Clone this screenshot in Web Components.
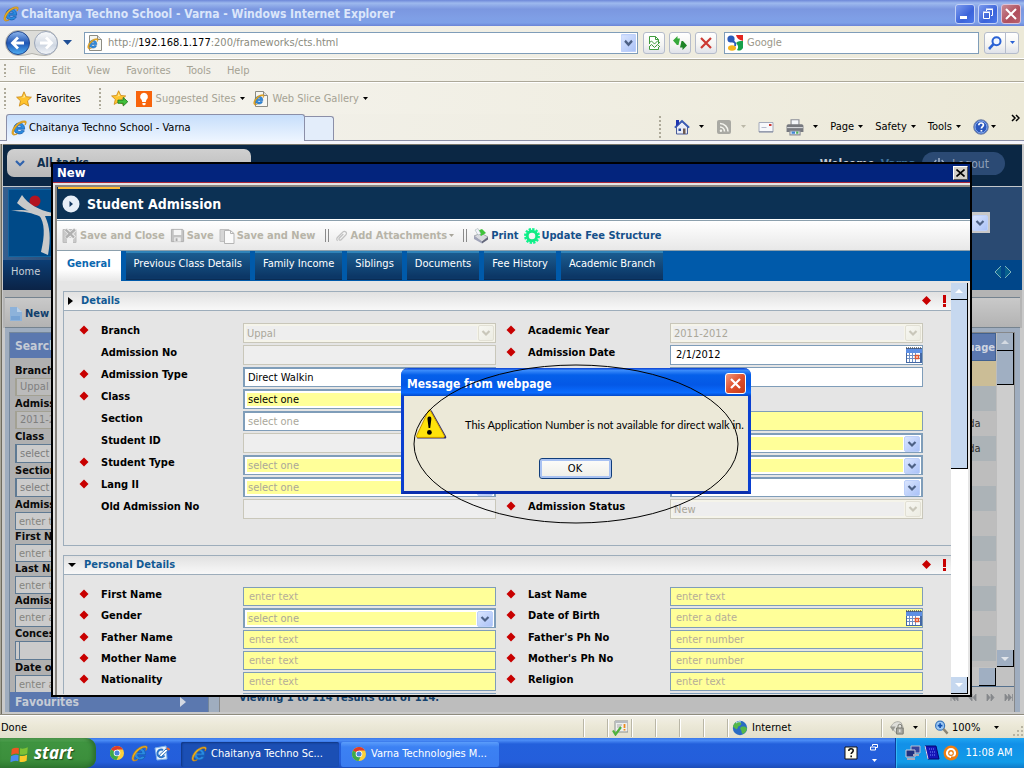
<!DOCTYPE html>
<html lang="en">
<head>
<meta charset="utf-8">
<title>Chaitanya Techno School - Varna</title>
<style>
  html, body { margin: 0; height: 100%; }
  body {
    --ui: "DejaVu Sans Condensed", "Noto Sans", sans-serif;
    --bold: "DejaVu Sans Condensed", "Noto Sans", sans-serif;
    font: 11px/14px var(--ui);
    color: #000;
    overflow: hidden;
  }
</style>
</head>
<body>
<xp-desktop></xp-desktop>
<script>
const E_MARK = `<path d="M13.600 9.200H6.200c.1 1.500 1 2.300 2.200 2.300.9 0 1.500-.4 1.900-1l3 .3c-.8 2-2.600 3.100-5 3.100C5 13.900 2.900 11.700 2.900 8.400 2.900 5.200 5.200 3 8.300 3c3.200 0 5.500 2.300 5.300 6.200zM6.300 7.200h4c-.2-1.300-1-1.900-2-1.900s-1.800.6-2 1.900z" fill="#2a8be0" stroke="#1560b4" stroke-width=".8"/><path d="M14.800 1.200C12 .2 7.600 2 4.600 5.200 1.600 8.400.3 12.500 1.400 14.300c.8 1.200 2.800.8 5-.6-1.700.7-3.200.9-3.700.1-.7-1.200.4-4.400 2.900-7.200 2.600-3 6.300-4.800 8-4.200.9.4.9 1.400.4 2.700 1-1.500 1.700-3.200.8-3.900z" fill="#f2b21d" stroke="#c98a12" stroke-width=".7"/>`;
const CHROME = `<circle cx="8" cy="8" r="7" fill="#fbd13a"/><path d="M8 8 2 4.400A7 7 0 0 1 14.100 4.600H8z" fill="#df3b2c"/><path d="M2 4.400A7 7 0 0 0 7.600 15L10 9.500 8 8z" fill="#3daa4b"/><circle cx="8" cy="8" r="3.300" fill="#fff"/><circle cx="8" cy="8" r="2.500" fill="#4a86dd"/>`;
const STAR = `<path d="M8 .8l2.200 4.900 5.200.5-3.900 3.600 1.200 5.300L8 12.400l-4.700 2.700 1.200-5.300L.6 6.200l5.200-.5z" fill="#ffc42e" stroke="#c98510" stroke-width=".8"/><path d="M8 3l1.300 3.300-4.800.6 3-.9z" fill="#fff0a8"/>`;
const ICONS = {
  ie: E_MARK,
  iepage: `<path d="M2.500.5h8l4 4v11h-12z" fill="#f7f7f2" stroke="#8c8c84"/><path d="M10.500.5v4h4" fill="#ddd" stroke="#8c8c84"/><g transform="translate(0 3) scale(.72)">${E_MARK}</g>`,
  chrome: CHROME,
  star: STAR,
  addstar: `<g transform="scale(.9)">${STAR}</g><path d="M6.500 9.500h5V7l4.300 4-4.300 4v-2.500h-5z" fill="#41c03c" stroke="#207a1f" stroke-width=".8"/>`,
  bulb: `<rect width="16" height="16" fill="#f8640c"/><path d="M8 1.800a4 4 0 0 1 2.300 7.200L9.800 11H6.200L5.700 9A4 4 0 0 1 8 1.800zM6.400 12h3.200v1.600L8 14.600l-1.600-1z" fill="#fff"/>`,
  home: `<path d="M2.500 8 8 2.500 13.500 8v7h-11z" fill="#e9ecf6" stroke="#4a5c9a"/><path d="M.8 8.700 8 2l7.200 6.700" fill="none" stroke="#3c5cb4" stroke-width="1.800"/><path d="M2 1h3v4l-3 2.500z" fill="#1f35b0"/><path d="M4.500 9.500h2.500V12H4.500z" fill="#24489f"/><path d="M9 9.500h2.500V15H9z" fill="#6d5a52"/>`,
  rss: `<rect x="1" y="1" width="14" height="14" rx="2" fill="#a9a9a3"/><g fill="none" stroke="#f4f4ee" stroke-width="1.600"><path d="M4 8a4.500 4.500 0 0 1 4.500 4.500M4 4.500a8 8 0 0 1 8 8"/></g><circle cx="4.900" cy="11.800" r="1.200" fill="#f4f4ee"/>`,
  mail: `<path d="M1 3.500h14v9.500H1z" fill="#f7f8fb" stroke="#a4aabb"/><path d="M1 12.800h14" stroke="#7f869c"/><path d="M11 5h2.500v2H11z" fill="#cc3a33"/><path d="M3.500 8.500h5" stroke="#b6bccd"/>`,
  print: `<path d="M4.500 1.500h7V7h-7z" fill="#f4f6fa" stroke="#8b8e96"/><path d="M.5 7C.5 6 1.500 5.500 2.500 5.500h11c1 0 2 .5 2 1.500v5.500H.5z" fill="#77797f"/><path d="M1 8.500h14" stroke="#d3d5d9"/><path d="M3.500 11.500h9V15h-9z" fill="#e6eefa" stroke="#8b8e96"/><path d="M5 12h3v2H5z" fill="#3f86d6"/><path d="M9 12h2v2H9z" fill="#54b053"/>`,
  help: `<circle cx="8" cy="8" r="7.300" fill="#2a57bd" stroke="#7d8aa6"/><circle cx="8" cy="8" r="6" fill="none" stroke="#8fb2ee"/><path d="M5.800 6.300C5.800 4.800 6.800 4 8.100 4s2.300.8 2.300 2.100c0 1.600-2 1.700-2 3.500M8.400 11v1.500" fill="none" stroke="#fff" stroke-width="1.700"/>`,
  compat: `<path d="M3.500 9V1.500h6l3 3V9M3.500 12v2.500h9V12" fill="#fdfffd" stroke="#3f9b3d"/><path d="M9.500 1.500v3h3" fill="none" stroke="#3f9b3d"/><path d="M3 8l2.500-2 3 3 3-3L14 8M3 12l2.500-2.500 3 3 3-3L14 12" fill="none" stroke="#3f9b3d"/>`,
  refresh: `<path d="M1 5.500 5.500 1v2.500H8L6.500 10H4.500L5 7v3z" fill="#36a93a"/><path d="M15 10.500 10.500 15v-2.500H8L9.500 6h2L11 9V6z" fill="#1f8427"/>`,
  stop: `<path d="M3 3l10 10M13 3 3 13" stroke="#cc3a33" stroke-width="2.200"/>`,
  google: `<rect width="16" height="16" fill="#fff"/><path d="M9 0h7v6c-3-1-6-2-7-6z" fill="#e3261f"/><path d="M16 6v7c-2 3-4 3-6 2 2-3 1-5-1-7 2-2 4-2 7-2z" fill="#16a04a"/><circle cx="4" cy="4" r="3.600" fill="#2b5bb8"/><ellipse cx="5" cy="13" rx="4" ry="2.800" fill="#f5b41a"/><path d="M5 6c3 1 4 2 3 5" stroke="#2b5bb8" stroke-width="2" fill="none"/>`,
  lens: `<circle cx="9.500" cy="6.200" r="4" fill="#f1f7ff" stroke="#2a62d4" stroke-width="2"/><path d="M6.500 9.200 2 14" stroke="#2a62d4" stroke-width="2.600"/>`,
  savex: `<path d="M1 1.500h13v13H1z" fill="#c9c9c9" stroke="#bcbcbc"/><path d="M5 10h6v5H5z" fill="#f1f1f1"/><path d="M3.500 1l9 9M13.500 1 4 10" stroke="#eee" stroke-width="4"/><path d="M3.500 1.500l8.500 8M13 1.500 4 9.500" stroke="#b0b0b0" stroke-width="2.400"/>`,
  save: `<path d="M1.500 1.500h12l1 1v12h-13z" fill="#c3c3c3" stroke="#adadad"/><path d="M4 2h8v5.500H4z" fill="#f5f5f5"/><path d="M4.500 10h7v4.500h-7z" fill="#ededed"/><path d="M6 11h2v3H6z" fill="#aaa"/>`,
  savenew: `<path d="M1 1.500h9v12H1z" fill="#d5d5d5" stroke="#c0c0c0"/><path d="M5.500 2.500h6l3.500 3v10H5.500z" fill="#fafafa" stroke="#b5b5b5"/><path d="M11.500 2.500v3H15" fill="none" stroke="#b5b5b5"/>`,
  clip: `<path d="M3 13.500c-1.800-1.500-1-3 .3-4.300l5.500-5.600c2.500-2.500 6 .8 3.500 3.300L7 12.300c-1.500 1.500-3.500-.5-2-2l4.500-4.600" fill="none" stroke="#c2c2c2" stroke-width="1.400"/>`,
  printer2: `<path d="M1 8l7-3 7 4-6 5z" fill="#d8dadf" stroke="#8b8e98" stroke-width=".7"/><path d="M1 8v3l8 4.500v-2z" fill="#9fa3b8"/><path d="M15 9v2.500L9 15.500v-2z" fill="#62667a"/><path d="M4 3l5-2 4 4-5 3z" fill="#3fc43a"/><path d="M2 2l3-1.500L8 6 5 7z" fill="#f2f4fb" stroke="#9aa" stroke-width=".5"/>`,
  gear: `<circle cx="8" cy="8" r="4.800" fill="none" stroke="#14e884" stroke-width="3"/><circle cx="8" cy="8" r="6.600" fill="none" stroke="#0cf48c" stroke-width="2.800" stroke-dasharray="2.200 1.256"/>`,
  newpage: `<path d="M2 1h7l5 5v9H2z" fill="#8db2da"/><path d="M9 1v5h5" fill="#b8cfe8"/><path d="M3 10h9v4H3z" fill="#77a3d4"/>`,
  cal: `<path d="M0 1h16v15H0z" fill="#4468a4"/><path d="M0 2h16v4H0z" fill="#5d8fe4"/><path d="M1 6h13v9H1z" fill="#fff"/><path d="M1 8.500h13M1 11.500h13M3.500 6v9M6.500 6v9M9.500 6v9" stroke="#6f8fc4"/><rect x="9.500" y="8.500" width="3" height="3" fill="#fff" stroke="#e4572e" stroke-width="1.500"/><path d="M0 1h16" stroke="#555" stroke-width="1.500" stroke-dasharray="1 1"/>`,
  shield: `<path d="M3 1h13v11H3z" fill="#eef0ee" stroke="#8e918e"/><path d="M3 1h13v2H3z" fill="#b8bcc0"/><path d="M12.500 4v4M12.500 9v1.500" stroke="#ef8a1c" stroke-width="1.800"/><path d="M5 5h5M5 7h4" stroke="#aaa"/><path d="M1 10.500l2.500 4L9 7" fill="none" stroke="#4fb23c" stroke-width="2.200"/>`,
  globe: `<circle cx="8" cy="8" r="7.200" fill="#2a6cc4"/><path d="M3 3c3-2 5-1 6 0s-1 3-2 3-1 2-2 3-3-2-4-2c0-2 1-3 2-4zM9 7c3-1 5 0 6 1 0 3-2 5-4 6-2-1-1-3-2-4s-1-2 0-3z" fill="#55b848"/><path d="M4 3c2-1.500 4-1.500 5-1" stroke="#bfe0ff" fill="none"/>`,
  lock: `<path d="M1 8c1-5 7-8 11-5l2 5v6H7z" fill="#dfdfda" stroke="#a9a9a2"/><path d="M0 7h6l-3 5z" fill="#9a9a93"/><path d="M7 8.500h7V15H7z" fill="#a9a9a2" stroke="#77776f"/><path d="M8.500 8.500v-2a2 2 0 0 1 4 0v2" fill="none" stroke="#77776f"/><path d="M10.500 10v3" stroke="#fff"/>`,
  zoomin: `<circle cx="6.500" cy="6" r="4.800" fill="#9cc8f5" stroke="#3b78bd" stroke-width="1.300"/><path d="M6.500 3.500v5M4 6h5" stroke="#0f4fae" stroke-width="1.700"/><path d="M10 9.500l4.500 5" stroke="#8b8574" stroke-width="2.500"/>`,
  flag: `<g transform="skewY(-8) translate(0 2)"><path d="M1.500 2.500Q4.500 1 7.400 2.500V7.500Q4.500 6 1 7.500z" fill="#ee5623"/><path d="M8.500 2.800Q11.500 4.200 15 2.800L14.500 8Q11.500 9.300 8.300 8z" fill="#7ec235"/><path d="M.8 8.500Q4 7 7.200 8.500L7 13.500Q4 12 .3 13.500z" fill="#4a8bf0"/><path d="M8.200 9Q11.300 10.300 14.400 9L14 14Q11 15.300 8 14z" fill="#fbc928"/></g>`,
  outlook: `<path d="M1 3l11-2 1 13-10 1z" fill="#eaf3fd" stroke="#7fb2ea"/><path d="M9 5a3.800 3.800 0 1 0 1.500 5.500" fill="none" stroke="#2a75c9" stroke-width="2"/><path d="M6 9.500l6-5.500 2 1.500-6.500 6L5 12z" fill="#fff" stroke="#2f71bb"/><path d="M13 3l2.500 2" stroke="#e5662d" stroke-width="2"/>`,
  netpc: `<path d="M6 1h9v7H6z" fill="#33449c" stroke="#b7bed2"/><path d="M1 5h9v7H1z" fill="#20307f" stroke="#c6ccdc"/><path d="M2 14h8M8 10h6" stroke="#aab" stroke-width="2"/>`,
  book: `<path d="M1 1h11l3 13H4z" fill="#1515b8" stroke="#050570"/><path d="M1 1l3 13" stroke="#dde"/><path d="M5 4h6M6 7h6M6 10h6" stroke="#7b8cff" stroke-dasharray="1 1"/>`,
  avast: `<circle cx="8" cy="8" r="7.500" fill="#ee7d12"/><circle cx="8" cy="8" r="4" fill="none" stroke="#fff" stroke-width="2.200"/><path d="M8 8v3.500h4.500V14H8z" fill="#ee7d12"/><circle cx="8" cy="8.200" r="1.600" fill="#fff"/>`,
  ask: `<path d="M2 2h12v12H2z" fill="#fffef0" stroke="#111"/><path d="M5.800 6c0-1.500.9-2.300 2.200-2.300s2.200.8 2.200 2c0 1.500-2 1.700-2 3.300M8.200 10.500v1.700" fill="none" stroke="#111" stroke-width="1.600"/>`,
  warn: `<path d="M8.600 1.200 15.500 13.600c.3.700.1 1.200-.6 1.200H1.700c-.7 0-1-.6-.6-1.200L7.300 1.200c.4-.7.9-.7 1.300 0z" fill="#2b2b70"/><path d="M7.700.9 14.600 13.200c.3.600.1 1-.5 1H1.500c-.7 0-.9-.4-.6-1L6.700.9c.3-.6.700-.6 1 0z" fill="#ffe30b" stroke="#c99800" stroke-width=".5"/><path d="M7.200 3.800c.9 0 1.100.8.9 1.800l-.5 3.900h-.8l-.5-3.900c-.2-1 0-1.800.9-1.800z"/><circle cx="7.200" cy="11.700" r="1.200"/>`,
  power: `<path d="M5 3.500a5.500 5.500 0 1 0 6 0M8 1v6" fill="none" stroke="#9fb0c8" stroke-width="1.800"/>`,
};
const svg = (name, size = 16) => `<svg class="i" width="${size}" height="${size}" viewBox="0 0 16 16" aria-hidden="true">${ICONS[name]}</svg>`;
const caret = (color = '#000', size = 5) => `<svg class="i" width="${size}" height="${Math.ceil(size / 2)}" viewBox="0 0 6 3" preserveAspectRatio="none" aria-hidden="true"><path d="M0 0h6L3 3z" fill="${color}"/></svg>`;
const BASE = `*,*::before,*::after{box-sizing:border-box}:host{display:block}svg{display:block;flex:none}
button{font:inherit;color:inherit;background:none;border:0;padding:0;margin:0;display:flex;align-items:center;white-space:nowrap}
a{color:inherit;text-decoration:none}input,select{font:inherit;margin:0;border-radius:0;min-width:0}`;
const define = (name, css, html) => customElements.define(name, class extends HTMLElement {
  constructor() {
    super();
    this.attachShadow({ mode: 'open' });
  }
  connectedCallback() {
    this.shadowRoot.innerHTML = `<style>${BASE}${css}</style>${typeof html === 'function' ? html(this) : html}`;
  }
});

const arrowButton = (from, to, mark, edge) => `url("data:image/svg+xml,${encodeURIComponent(`<svg xmlns="http://www.w3.org/2000/svg" width="16" height="16"><defs><linearGradient id="g" x2="1" y2="1"><stop stop-color="${from}"/><stop offset="1" stop-color="${to}"/></linearGradient></defs><rect x=".5" y=".5" width="15" height="15" rx="1.500" fill="url(#g)" stroke="${edge}"/><path d="M4.500 6 8 9.500 11.500 6" fill="none" stroke="${mark}" stroke-width="2.200"/></svg>`)}")`;
const ARROW = arrowButton('#dbe6fe', '#a9c1f7', '#4d6185', '#bdd0fa');
const ARROW_OFF = arrowButton('#f7f7f2', '#ecece2', '#c9c7ba', '#e2e0d4');

/* ---------- window chrome ---------- */
define('xp-title-bar', `
:host{height:26px;background:linear-gradient(#6d87d8,#9db9ee 12%,#7b97e0 35%,#7f9fe6 70%,#7da0e8 88%,#6a84d6);}
.bar{display:flex;align-items:center;height:100%;padding:1px 3px 0 3px;gap:2px}
h1{flex:1;margin:0;font:bold 12px/16px var(--bold);color:#dbe6fa;white-space:nowrap}
button{width:20px;height:20px;justify-content:center;border:1px solid #c3d2f6;border-radius:3px;background:linear-gradient(135deg,#7c9bee,#3b63da 60%,#4a77ea);margin-left:1px}
.x{background:linear-gradient(135deg,#c78b95,#b04e5c 60%,#b8606c);border-color:#dcc1d6}`,
`<div class="bar">${svg('ie')}<h1>Chaitanya Techno School - Varna - Windows Internet Explorer</h1>
<button aria-label="Minimize"><svg width="12" height="12"><path d="M1 8h7v3H1z" fill="#fff"/></svg></button>
<button aria-label="Restore"><svg width="12" height="12" fill="none" stroke="#fff"><path d="M4.500 3V1.500h6v6H9M4 1h7M1.500 4.500h6v6h-6zM1 4h7"/></svg></button>
<button class="x" aria-label="Close"><svg width="12" height="12"><path d="M1 1l10 10M11 1 1 11" stroke="#fff" stroke-width="2"/></svg></button></div>`);

define('ie-address-bar', `
:host{height:34px;background:linear-gradient(90deg,#f4f3ef,#ece9d8);border-bottom:1px solid #aca899;box-shadow:inset 0 -1px #fff}
.bar{display:flex;align-items:center;height:33px;padding:0 5px;gap:5px}
.nav{display:flex;align-items:center;width:73px;margin-right:1px;gap:4px}
.field{display:flex;align-items:center;height:22px;background:#fff;border:1px solid #7f9db9;position:relative}
.url{flex:1;padding-left:2px;gap:5px}
.url input{position:absolute;inset:0;opacity:0;width:100%}
.url span{flex:1;color:#8b8b80;white-space:nowrap}.url b{font-weight:normal;color:#000}
.drop{width:15px;height:18px;margin-right:1px;background:${ARROW} center/16px 18px}
.sq{width:22px;height:22px;justify-content:center;border:1px solid #b5bccb;border-radius:3px;background:linear-gradient(#fff,#f4f4f2 60%,#dfe2ea)}
.search{width:255px;margin-left:2px;padding-left:2px;gap:4px}
.search input{flex:1;border:0;padding:0;background:none}.search input::placeholder{color:#9b978a;opacity:1}
.set{display:flex;gap:4px}
.go{display:flex}.go .sq{border-radius:3px 0 0 3px}.go .sq + .sq{margin-left:-1px;width:14px;border-radius:0 3px 3px 0}`,
`<div class="bar"><div class="nav"><svg width="54" height="28" viewBox="0 0 54 28"><defs><linearGradient id="b" x2="0" y2="1"><stop stop-color="#8fb7ee"/><stop offset=".5" stop-color="#1f55b4"/><stop offset="1" stop-color="#4fb0f4"/></linearGradient><linearGradient id="w" x2="0" y2="1"><stop stop-color="#fafbfc"/><stop offset=".6" stop-color="#cfd7e2"/><stop offset="1" stop-color="#f3f6fa"/></linearGradient></defs><path d="M13 1.500H40a12.500 12.500 0 0 1 0 25Q34 26.500 27 24.500 20 26.500 13 26.500A12.500 12.500 0 0 1 13 1.500z" fill="#dcdcd8" stroke="#b3b3ad"/><circle cx="13" cy="14" r="11.500" fill="url(#b)" stroke="#24478c"/><circle cx="41" cy="14" r="11.500" fill="url(#w)" stroke="#9aa5b8"/><path d="M19 14H8M13 8.500 7.500 14l5.500 5.500M35 14h11M41 8.500l5.500 5.500L41 19.500" fill="none" stroke="#fff" stroke-width="2.800"/></svg>${caret('#1f4f96', 9)}</div>
<div class="field url">${svg('iepage')}<input aria-label="Address" tabindex="0"><span>http://<b>192.168.1.177</b>:200/frameworks/cts.html</span><button class="drop" aria-label="Address history"></button></div>
<div class="set"><button class="sq" aria-label="Compatibility view">${svg('compat')}</button><button class="sq" aria-label="Refresh">${svg('refresh')}</button><button class="sq" aria-label="Stop">${svg('stop')}</button></div>
<div class="field search">${svg('google')}<input placeholder="Google" aria-label="Search"></div>
<div class="go"><button class="sq" aria-label="Go">${svg('lens')}</button><button class="sq" aria-label="Search options">${caret('#2a62d4')}</button></div></div>`);

const GRIP = `.grip{width:3px;align-self:stretch;margin:4px 0;background:radial-gradient(circle at 1px 1px,#aeaa9a 1px,transparent 1px) 0 0/3px 4px}`;
define('ie-menu-bar', `${GRIP}
:host{height:22px;background:linear-gradient(90deg,#f4f3ef,#ece9d8);border-bottom:1px solid #aca899}
nav{display:flex;align-items:center;height:21px;padding-left:4px;color:#a5a294}
.grip{margin-right:12px}button{margin-right:16px}`,
`<nav><i class="grip"></i>${['File', 'Edit', 'View', 'Favorites', 'Tools', 'Help'].map(t => `<button>${t}</button>`).join('')}</nav>`);

define('ie-favorites-bar', `${GRIP}
:host{height:32px;background:linear-gradient(90deg,#f6f5f1,#ece9d8);border-top:1px solid #fff}
nav{display:flex;align-items:center;height:31px;padding-left:4px;color:#a5a294}
.grip{margin:5px 0}button{gap:4px}`,
`<nav><i class="grip"></i><button style="color:#000;margin-left:9px">${svg('star')}Favorites</button>
<i class="grip" style="margin-left:18px"></i><button style="margin-left:9px" aria-label="Add to favorites bar">${svg('addstar', 17)}</button>
<button style="margin-left:8px">${svg('bulb')}Suggested Sites ${caret()}</button><button style="margin-left:8px">${svg('iepage')}Web Slice Gallery ${caret()}</button></nav>`);

define('ie-tab-strip', `
:host{height:30px;background:linear-gradient(90deg,#f4f3ef,#ece9d8);border-bottom:3px solid #f4f4fb}
.row{display:flex;align-items:flex-end;height:27px;border-bottom:1px solid #8b8fa8;padding:0 4px 0 6px}
.tab{height:27px;margin-bottom:-1px;width:299px;border:1px solid #8b8fa8;border-bottom:0;border-radius:3px 3px 0 0;background:linear-gradient(#c6defb,#edf5ff);padding-left:4px;gap:2px}
.newtab{height:24px;width:29px;border:1px solid #8b8fa8;border-left:0;border-bottom:0;border-radius:0 3px 0 0;background:#e3edfa}
.cmds{display:flex;align-items:center;justify-content:flex-end;flex:1;gap:12px;height:27px}
.cmds button{gap:4px}.cmds .w{gap:9px}
.grip{width:3px;height:22px;background:radial-gradient(circle at 1px 1px,#aeaa9a 1px,transparent 1px) 0 0/3px 4px}
.more{align-self:flex-start;margin:1px 0 0 3px}`,
`<div class="row"><button class="tab">${svg('ie')}Chaitanya Techno School - Varna</button><button class="newtab" aria-label="New tab"></button>
<div class="cmds"><i class="grip"></i><button class="w" aria-label="Home">${svg('home')}${caret()}</button><button class="w" aria-label="Feeds">${svg('rss')}${caret('#bbb8a8')}</button><button aria-label="Read mail">${svg('mail')}</button><button class="w" aria-label="Print">${svg('print', 18)}${caret()}</button>
<button>Page ${caret()}</button><button>Safety ${caret()}</button><button>Tools ${caret()}</button><button style="gap:2px" aria-label="Help">${svg('help')}${caret()}</button><button class="more" aria-label="More commands"><svg width="9" height="8"><path d="M1 1l3 3-3 3M5 1l3 3-3 3" fill="none" stroke="#000" stroke-width="1.500"/></svg></button></div></div>`);

/* ---------- application behind the dialog ---------- */
define('side-field', `
label{display:block;font:bold 11px/14px var(--bold);white-space:nowrap;color:#0a0a0a;height:14px}
input,select{display:block;width:184px;height:18px;border:1px solid #5f7a93;background:#cbcbcb;color:#7d7d7d;padding:0 3px;line-height:16px}
input::placeholder{color:#85857f;opacity:1}select{appearance:none;border-width:1px 1px 1px 2px;opacity:1}
:host([tall]) input,:host([tall]) select{height:19px}:host([gap]){margin-bottom:1px}
select:disabled,input:disabled{background:#bbb;border-color:#a3a193;color:#7f7f7f}
.box{height:19px;padding-left:3px;width:184px;border:1px solid #5f7a93;background:#cbcbcb}.box input{width:100%;border-width:0 0 0 1px;height:17px}`,
el => {
  const a = n => el.getAttribute(n);
  const value = a('value') || 'select one';
  const ctl = el.hasAttribute('text') ? `<input id="c" placeholder="${a('text')}">`
    : el.hasAttribute('box') ? `<div class="box"><input id="c"></div>`
    : `<select id="c" ${el.hasAttribute('off') ? 'disabled' : ''}><option>${value}</option></select>`;
  return `<label for="c">${a('label')}</label>${ctl}`;
});

define('search-panel', `
:host{width:200px;margin-left:4px;display:flex;flex-direction:column;background:#b0b0b0;border:1px solid #75879b;border-bottom:0;overflow:hidden}
h2{margin:0;height:25px;flex:none;padding:0 5px;background:#5b78af;color:#c5cbd5;font:bold 12px/26px var(--bold)}
.list{flex:1;min-height:0;overflow:hidden;padding:6px 5px 0 5px}
.fav{height:20px;display:flex;align-items:center;justify-content:space-between;padding-right:22px;line-height:20px}`,
`<h2>Search</h2><div class="list">
<side-field gap off label="Branch" value="Uppal"></side-field><side-field gap off label="Admission Year" value="2011-2012"></side-field>
<side-field gap tall label="Class"></side-field><side-field gap tall label="Section"></side-field>
<side-field label="Admission No" text="enter text"></side-field><side-field label="First Name" text="enter text"></side-field><side-field label="Last Name" text="enter text"></side-field>
<side-field tall label="Admission Date" text="enter a date"></side-field><side-field box gap label="Concession"></side-field><side-field label="Date of Birth" text="enter a date"></side-field></div>
<h2 class="fav">Favourites<svg width="6" height="10"><path d="M0 0v10l6-5z" fill="#d3d8e2"/></svg></h2>`);

const PAGER = ['M1 0v7M8 0 5 3.500 8 7zM5 0 2 3.500 5 7z', 'M8 0 5 3.500 8 7zM4 0 1 3.500 4 7z', 'M1 0l3 3.500L1 7zM5 0l3 3.500L5 7z', 'M1 0l3 3.500L1 7zM4.500 0l3 3.500-3 3.500zM8.500 0v7'];
define('results-panel', `
:host{flex:1;display:flex;flex-direction:column;margin-left:10px;border:1px solid #86888a;border-bottom:0;background:#bdbdbd;min-width:0}
.grid{flex:1;display:flex;min-height:0}
.tbl{flex:1;overflow:hidden;min-width:0}
table{width:100%;border-collapse:collapse}
th{height:27px;background:#5b78af;color:#cfd5e0;font:bold 11px/25px var(--bold);text-align:right;padding:0;border:1px solid #41618f}
td{height:25px;padding:0 15px 0 0;text-align:right;line-height:23px;color:#333;background:#acb3b7}
tr:nth-child(2n+3) td{background:#bdbdbd}tr:first-child td{background:#cbbd96}
.vs{width:17px;background:#cdcdcd;display:flex;flex-direction:column;justify-content:space-between;margin-left:1px}
.up{height:52px;background:linear-gradient(#a0afc2 17px,#000 17px,#000 18px,#a0afc2 18px);border-bottom:1px solid #000;border-right:1px solid #000;padding:7px 4px}
.dn{height:17px;background:#a0afc2;border:solid #000;border-width:0 1px 1px 0;padding:7px 4px}
.hs{height:20px;display:flex;justify-content:flex-end;padding:1px 18px 1px 0;background:#c2c2c2;border-bottom:1px solid #55718f}.hs i{width:17px;height:18px;background:#a0afc2;border:solid #000;border-width:0 1px 1px 0}
footer{height:25px;display:flex;align-items:center;padding:0 1px 3px 19px;font:bold 11px/14px var(--bold);color:#14426f;justify-content:space-between}
.pg{display:flex;gap:9px}`,
`<div class="grid"><div class="tbl"><table><thead><tr><th>Second Language</th></tr></thead><tbody>${Array.from({ length: 13 }, (_, i) => `<tr><td>${i === 2 || i === 3 ? 'Kannada' : ''}</td></tr>`).join('')}</tbody></table></div>
<div class="vs"><div class="up"><svg width="8" height="4"><path d="M0 4h8L4 0z" fill="#d4dae2"/></svg></div><div class="dn"><svg width="8" height="4"><path d="M0 0h8L4 4z" fill="#e1e5ea"/></svg></div></div></div>
<div class="hs"><i></i></div>
<footer><span>Viewing 1 to 114 results out of 114.</span><span class="pg">${PAGER.map(d => `<svg width="9" height="8"><path d="${d}" fill="#85888c" stroke="#85888c" stroke-width=".8"/></svg>`).join('')}</span></footer>`);

define('school-app', `
:host{display:flex;flex-direction:column;height:100%;border-left:1px solid #aaa79a;box-shadow:inset 1px 0 #6f6c60;padding:0 2px 2px 2px;background:#c9c9c9}
.top{height:42px;flex:none;display:flex;justify-content:space-between;align-items:flex-start;background:#0b2744;border-top:1px solid #79776c;padding:4px 17px 0 4px;color:#c7ccd3}
.tasks{width:244px;height:28px;border-radius:7px;background:linear-gradient(#d0d0d0,#b9b9b9);display:flex;align-items:center;padding-left:8px;gap:12px;font:bold 12px/14px var(--bold);color:#10304f}
.who{font:bold 12px/14px var(--bold);display:flex;gap:6px;margin:8px 0 0 auto;padding-right:6px}.who b{color:#40739e}
.out{height:23px;width:83px;margin-top:3px;border-radius:12px;background:#2b4a74;color:#8fa0b8;font-size:12px;gap:6px;padding-left:10px}
.brand{height:74px;flex:none;background:linear-gradient(90deg,#355f8f,#2a4a72 60px);border-top:1px solid #c3c8cc;display:flex;justify-content:space-between;padding:2px 32px 2px 5px;align-items:flex-start}
select{appearance:none;height:21px;width:150px;margin-top:23px;border:2px solid #c9c9c9;background:${ARROW} right center/16px 16px no-repeat #c9c9c9}
.nav{height:30px;flex:none;background:linear-gradient(#0b3d74,#0b2346);display:flex;justify-content:space-between;align-items:center;color:#c8ced6}
.nav a{padding:0 8px 6px}.nav span{height:30px;flex:1;margin-left:120px;padding:5px 10px 0 0;background:#004689;display:flex;justify-content:flex-end}
.tool{height:31px;flex:none;margin:7px 2px 0 2px;border:solid #75838f;border-width:1px 0;background:linear-gradient(#c9c9c9,#b3b3b3);display:flex;align-items:center;padding-left:3px}
.tool button{gap:1px;font:bold 11px/14px var(--bold);color:#123f6c;padding-top:2px}
.strip{background:#b4b4b4}
.main{flex:1;min-height:0;display:flex;background:#9fadbf;padding:4px 5px 0 0;margin:0 2px}`,
`<header class="top"><div class="tasks"><svg width="10" height="8"><path d="M1 2l4 4 4-4" fill="none" stroke="#2f63ad" stroke-width="2.200"/></svg>All tasks</div><div class="who"><span>Welcome</span><b>Varna</b></div><button class="out">${svg('power', 14)}Logout</button></header>
<div class="brand"><svg width="70" height="68" viewBox="0 0 70 68"><rect x=".5" y=".5" width="69" height="67" fill="#004a88" stroke="#12649f"/><circle cx="27" cy="12" r="5.500" fill="#b3141f"/><path d="M14 6 9 14c6 6 14 9 22 12 6 8 6 20 2 37l7 3c3-17 2-28-3-39h8v-3C30 21 20 15 14 6z" fill="#c9c9c9"/><path d="M3 22c12 0 22 2 30 6l-3-5C22 21 12 20 3 22z" fill="#c9c9c9"/></svg><select aria-label="Campus"></select></div>
<div class="strip"><nav class="nav"><a href="#home">Home</a><span><svg width="18" height="14"><path d="M7 1 1 7l6 6M11 1l6 6-6 6" fill="#07608c" stroke="#7fb3bd"/></svg></span></nav>
<div class="tool"><button>${svg('newpage')}New</button></div></div>
<div class="main"><search-panel></search-panel><results-panel></results-panel></div>`);

/* ---------- student admission window ---------- */
define('form-field', `
:host{display:grid;grid-template-columns:22px 142px minmax(0,1fr);align-items:start}
svg.d{margin:2px 0 0 0}
label{font:bold 11px/14px var(--bold);white-space:nowrap;grid-column:2;padding-top:1px}
.c{grid-column:3;position:relative;display:flex}
input,select{width:100%;height:20px;border:1px solid #7f9db9;background:#fff;padding:0 5px 1px;color:#000;line-height:17px}
:host([short]) input{height:19px}
input::placeholder{color:#b5ad98;opacity:1}
select{appearance:none;border-width:2px 2px 1px;padding:0 3px;background:${ARROW} right 1px center/16px 16px no-repeat #fff}
:host([yellow]) input{background:#ff9}
:host([yellow]) select{background:${ARROW} right 1px center/16px 16px no-repeat,linear-gradient(#ff9,#ff9) 2px 2px/calc(100% - 20px) calc(100% - 4px) no-repeat #fff}
:host([hint]) select{color:#aaa79a}
:host([off]) input{background:#eee;border-color:#c9c7ba}
:host([off]) select{opacity:1;border:1px solid #c9c7ba;color:#aaa79a;background:${ARROW_OFF} right 1px center/16px 16px no-repeat,linear-gradient(#eee,#eee) 2px 2px/calc(100% - 20px) calc(100% - 4px) no-repeat #f5f4ea}
.cal{position:absolute;right:1px;top:2px}`,
el => {
  const a = n => el.getAttribute(n), has = n => el.hasAttribute(n);
  const kind = a('kind') || 'text', off = has('off') ? 'disabled' : '';
  const aria = has('aria') ? `aria-label="${a('aria')}"` : '';
  const ctl = kind === 'select' ? `<select id="c" ${aria} ${off}><option>${a('value') || ''}</option></select>`
    : `<input id="c" ${aria} ${off} value="${a('value') || ''}" placeholder="${a('hint') || ''}">${kind === 'date' ? `<button class="cal" aria-label="Pick a date">${svg('cal')}</button>` : ''}`;
  return `${has('required') ? '<svg class="d" width="10" height="10"><path d="M5 .5 9.500 5 5 9.500.5 5z" fill="#c80000"/></svg>' : ''}${a('label') ? `<label for="c">${a('label')}</label>` : ''}<div class="c">${ctl}</div>`;
});

define('form-section', `
:host{border:1px solid #9dadbb;border-right:0;margin:0 0 9px 6px;flex:none}
h3{margin:0;height:19px;display:flex;align-items:center;gap:8px;padding:0 2px 1px 4px;border-bottom:1px solid #9dadbb;background:linear-gradient(#e1e1e1,#f8f8f8);font:bold 11px/14px var(--bold);color:#125a94}
h3 span{flex:1}
.body{display:grid;grid-template-columns:minmax(0,1fr) minmax(0,1fr);gap:2px 10px;padding:12px 28px 26px 15px}`,
el => `<h3>${el.hasAttribute('closed') ? '<svg width="5" height="8"><path d="M0 0v8l5-4z"/></svg>' : '<svg width="8" height="4"><path d="M0 0h8L4 4z"/></svg>'}<span>${el.getAttribute('title')}</span><svg width="9" height="9"><path d="M4.500 0 9 4.500 4.500 9 0 4.500z" fill="#c80000"/></svg><svg width="10" height="12"><path d="M4 0h3v8H4zM4 9h3v3H4z" fill="#c80000"/></svg></h3><div class="body"><slot></slot></div>`);

define('admission-window', `
:host{display:flex;flex-direction:column;background:#e5e5e5;border:2px solid #000;overflow:hidden}
.title{height:19px;flex:none;display:flex;justify-content:space-between;align-items:center;background:#03247d;border-bottom:1px solid #a8283a;color:#fff;font:bold 13px/16px var(--bold);padding:0 2px 0 4px}
.title button{width:15px;height:14px;justify-content:center;background:#d4d0c8;border:1px solid #fff;border-color:#fff #555 #555 #fff}
.frame{flex:1;display:flex;flex-direction:column;min-height:0;margin-top:2px;margin-left:2px;border:solid #8a8680;border-width:2px 0 0 2px}
.head{height:33px;flex:none;display:flex;align-items:center;gap:7px;padding:1px 0 0 5px;background:linear-gradient(#fdbb34,#fdbb34) 1px 0/62px 2px no-repeat #0c3154;border-bottom:1px solid #fff;color:#fff;font:bold 14px/18px var(--bold)}
.tools{height:31px;flex:none;display:flex;align-items:center;gap:5px;padding-left:5px;background:linear-gradient(#fff,#e8e8e8);border:solid #8ca0ad;border-width:1px 0 1px;font:bold 11px/14px var(--bold);color:#b7b4a8}
.tools button{gap:2px}.tools .on{color:#15508a;padding-top:1px}.sep{width:4px;height:13px;border:solid #8a8a8a;border-width:0 1px;margin:0 1px 0 4px}
.tabs{height:30px;flex:none;display:flex;gap:5px;background:#005aaa}
.tabs button{height:29px;padding:0 8px 4px;background:linear-gradient(#1a5c90,#0c3766 90%);border-top:2px solid #2f83b8;border-bottom:1px solid #0a2c55;color:#fff}
.tabs .cur{height:30px;background:linear-gradient(#fff 60%,#e8e8e8);border:0;color:#0a67b0;font:bold 11px/14px var(--bold);padding:0 10px 4px}
.body{flex:1;min-height:0;display:flex;padding:1px 0 1px}
.scroll{flex:1;min-width:0;overflow:hidden;display:flex;flex-direction:column;padding-top:9px}
.bar{width:17px;margin-right:2px;flex:none;display:flex;flex-direction:column;background:#fff;margin-top:1px}
.b{height:17px;flex:none;background:#c6d8ef;border:solid #000;border-width:0 1px 1px 0;padding:6px 4px}
.th{height:169px;background:#c6d8ef;border:solid #000;border-width:0 1px 1px 0}
.b.e{margin-top:auto}`,
`<div class="title"><span>New</span><button aria-label="Close"><svg width="9" height="8"><path d="M.5.5l8 7M8.500.5l-8 7" stroke="#000" stroke-width="1.600"/></svg></button></div>
<div class="frame"><div class="head"><svg width="18" height="18"><circle cx="9" cy="9" r="8.500" fill="#e8eff8"/><path d="M7.500 6v6l3.500-3z" fill="#14365e"/></svg>Student Admission</div>
<div class="tools"><button>${svg('savex')}Save and Close</button><button>${svg('save', 15)}Save</button><button>${svg('savenew')}Save and New</button><i class="sep"></i><button>${svg('clip', 14)}Add Attachments${caret('#a8a59a')}</button><i class="sep"></i><button class="on">${svg('printer2')}Print</button><button class="on">${svg('gear')}Update Fee Structure</button></div>
<nav class="tabs"><button class="cur">General</button>${['Previous Class Details', 'Family Income', 'Siblings', 'Documents', 'Fee History', 'Academic Branch'].map(t => `<button>${t}</button>`).join('')}</nav>
<div class="body"><div class="scroll">
<form-section closed title="Details">
<form-field required off kind="select" label="Branch" value="Uppal"></form-field><form-field required off kind="select" label="Academic Year" value="2011-2012"></form-field>
<form-field off label="Admission No"></form-field><form-field required kind="date" label="Admission Date" value="2/1/2012"></form-field>
<form-field required label="Admission Type" kind="select" value="Direct Walkin"></form-field><form-field aria="Application number"></form-field>
<form-field required yellow kind="select" label="Class" value="select one"></form-field><span></span>
<form-field hint kind="select" label="Section" value="select one"></form-field><form-field yellow aria="Roll number"></form-field>
<form-field off label="Student ID"></form-field><form-field yellow kind="select" aria="Student category"></form-field>
<form-field required yellow hint kind="select" label="Student Type" value="select one"></form-field><form-field yellow kind="select" aria="First language"></form-field>
<form-field required yellow hint kind="select" label="Lang II" value="select one"></form-field><form-field kind="select" aria="Third language"></form-field>
<form-field off label="Old Admission No"></form-field><form-field required off kind="select" label="Admission Status" value="New"></form-field>
</form-section>
<form-section title="Personal Details">
${[['First Name', 'Last Name', 'text', 'enter text'], ['Gender', 'Date of Birth'], ['Father Name', "Father's Ph No", 'text', 'enter number'], ['Mother Name', "Mother's Ph No", 'text', 'enter number'], ['Nationality', 'Religion', 'text', 'enter text'], ['', '', 'text', '']].map(([l, r, k, h]) => k
  ? `<form-field short ${l ? 'required' : 'aria="More"'} yellow label="${l}" hint="${l && 'enter text'}"></form-field><form-field short ${r ? 'required' : 'aria="More"'} yellow label="${r}" hint="${h}"></form-field>`
  : `<form-field required yellow hint kind="select" label="${l}" value="select one"></form-field><form-field required yellow kind="date" label="${r}" hint="enter a date"></form-field>`).join('')}
</form-section></div>
<div class="bar"><div class="b"><svg width="8" height="4"><path d="M0 4h8L4 0z" fill="#fff"/></svg></div><div class="th"></div><div class="b e"><svg width="8" height="4"><path d="M0 0h8L4 4z" fill="#fff"/></svg></div></div></div></div>`);

define('message-dialog', `
:host{display:flex;flex-direction:column;border-radius:7px 7px 0 0;background:#ece9d8;border:3px solid #0a3fd0;border-top:0;border-bottom-color:#0a2fae;box-shadow:inset 0 0 0 1px #e8e6da}
.t{height:28px;display:flex;align-items:center;justify-content:space-between;margin:0 -3px;padding:3px 5px 0 6px;border-radius:7px 7px 0 0;background:linear-gradient(#0a3fd0,#3a8bfb 9%,#0560ea 25%,#0458e6 60%,#0a6cff 88%,#0348c8);color:#fff;font:bold 12px/16px var(--bold)}
.t button{width:21px;height:21px;justify-content:center;border:1px solid #fff;border-radius:3px;background:linear-gradient(135deg,#f09a80,#e0502d 50%,#c53c18)}
.m{display:flex;gap:18px;padding:13px 0 0 11px;height:62px;white-space:nowrap;font-family:Lato,Roboto,sans-serif}.m p{margin:9px 0 0}
.ok{width:73px;height:21px;margin:0 auto;justify-content:center;border:1px solid #103d7b;border-radius:3px;background:linear-gradient(#fdfdfb,#efeee7);box-shadow:inset 0 0 0 2px #a9c2f2}
.body{display:flex;flex-direction:column;padding:0 2px 12px 0}`,
`<div class="t"><span>Message from webpage</span><button aria-label="Close"><svg width="13" height="13"><path d="M2 2l9 9M11 2l-9 9" stroke="#fff" stroke-width="2.200"/></svg></button></div>
<div class="body"><div class="m">${svg('warn', 32)}<p>This Application Number is not available for direct walk in.</p></div><button class="ok">OK</button></div>`);

/* ---------- status bar and taskbar ---------- */
define('ie-status-bar', `
:host{height:23px;background:linear-gradient(#f1efe6,#ece9d8 40%,#e2dfcc);border-top:1px solid #fff}
.r{display:flex;align-items:center;height:22px;padding:1px 0 0 1px}.r span:first-child{flex:1}
.c{width:24px;height:18px;border-left:1px solid #b9b6a6;box-shadow:inset 1px 0 #fff;display:flex;align-items:center;justify-content:center}
.z{width:154px;justify-content:flex-start;gap:4px;padding-left:4px}.l{width:44px;gap:8px}.p{width:99px;gap:3px;justify-content:flex-start;padding-left:8px}
.p .sp{width:10px}.p .rs{align-self:flex-end;margin-left:10px}`,
`<div class="r"><span>Done</span><i class="c"></i><i class="c">${svg('shield')}</i><i class="c"></i><i class="c"></i><i class="c"></i><i class="c"></i><span class="c z">${svg('globe')}Internet</span><span class="c l">${svg('lock', 15)}${caret()}</span><span class="c p">${svg('zoomin', 15)}100%<i class="sp"></i>${caret()}<svg class="rs" width="12" height="12"><path d="M9 1h2v2H9zM5 5h2v2H5zM9 5h2v2H9zM1 9h2v2H1zM5 9h2v2H5zM9 9h2v2H9z" fill="#b8b4a2"/></svg></span></div>`);

define('xp-taskbar', `
:host{height:30px;background:linear-gradient(#3a78ea,#4a8bf5 8%,#2360dc 20%,#245edb 80%,#1c4cb8)}
.r{display:flex;height:30px;color:#fff;align-items:center}
.start{width:96px;height:30px;border-radius:0 10px 10px 0;background:linear-gradient(#5fae5f,#3f9440 15%,#3c8f3c 70%,#2f7a31);padding-left:10px;gap:5px;font:italic bold 17px/20px "Noto Sans","Open Sans",sans-serif;text-shadow:1px 1px 1px #1d4a1d;box-shadow:inset -3px 0 4px #2c6e2c}
.ql{display:flex;gap:6px;margin:0 11px 0 13px}
.task{width:158px;height:25px;margin:2px 2px 0 0;border-radius:2px;background:linear-gradient(#5b9dfb,#3c81f3 20%,#3a7cf0);padding-left:10px;gap:4px}
.task.d{background:#1b4fb4;box-shadow:inset 1px 1px 2px #0f3580}
.lang{margin-left:auto;display:flex;gap:10px;align-items:center;padding-right:16px}
.tray{height:30px;width:129px;display:flex;align-items:center;justify-content:center;gap:3px;background:linear-gradient(#1fa6f2,#1290e8 20%,#119be8 80%,#0f7bc8);border-left:1px solid #0b3f9d;box-shadow:inset 1px 0 #35b8f5;padding-right:3px}.tray span{margin-left:4px}`,
`<div class="r"><button class="start">${svg('flag', 19)}start</button><div class="ql">${svg('chrome')}${svg('ie', 17)}${svg('outlook')}</div>
<button class="task d">${svg('ie')}Chaitanya Techno Sc...</button><button class="task">${svg('chrome')}Varna Technologies M...</button>
<div class="lang">${svg('ask')}<svg width="10" height="20"><path d="M3.500 3V1.500h5v3H7M1.500 4h5v3h-5z" fill="none" stroke="#fff"/><path d="M3 16h5l-2.500 3z" fill="#fff"/></svg></div>
<div class="tray">${svg('netpc')}${svg('book')}${svg('avast')}<span>11:08 AM</span></div></div>`);

define('xp-desktop', `
:host{display:flex;flex-direction:column;min-height:100vh;height:100%}
xp-title-bar,ie-address-bar,ie-menu-bar,ie-favorites-bar,ie-tab-strip,ie-status-bar,xp-taskbar{flex:none}
.view{flex:1;min-height:0;position:relative;border-bottom:1px solid #8f8c7e}
admission-window{position:absolute;inset:18px 52px 17px 51px}
message-dialog{position:absolute;left:401px;top:224px;width:350px}
.ring{position:absolute;left:413px;top:220px}`,
`<xp-title-bar></xp-title-bar><ie-address-bar></ie-address-bar><ie-menu-bar></ie-menu-bar><ie-favorites-bar></ie-favorites-bar><ie-tab-strip></ie-tab-strip>
<div class="view"><school-app></school-app><admission-window></admission-window><message-dialog role="alertdialog"></message-dialog>
<svg class="ring" width="326" height="160" aria-hidden="true"><ellipse cx="163" cy="80" rx="162" ry="79" fill="none" stroke="#000"/></svg></div>
<ie-status-bar></ie-status-bar><xp-taskbar></xp-taskbar>`);
</script>
</body>
</html>
